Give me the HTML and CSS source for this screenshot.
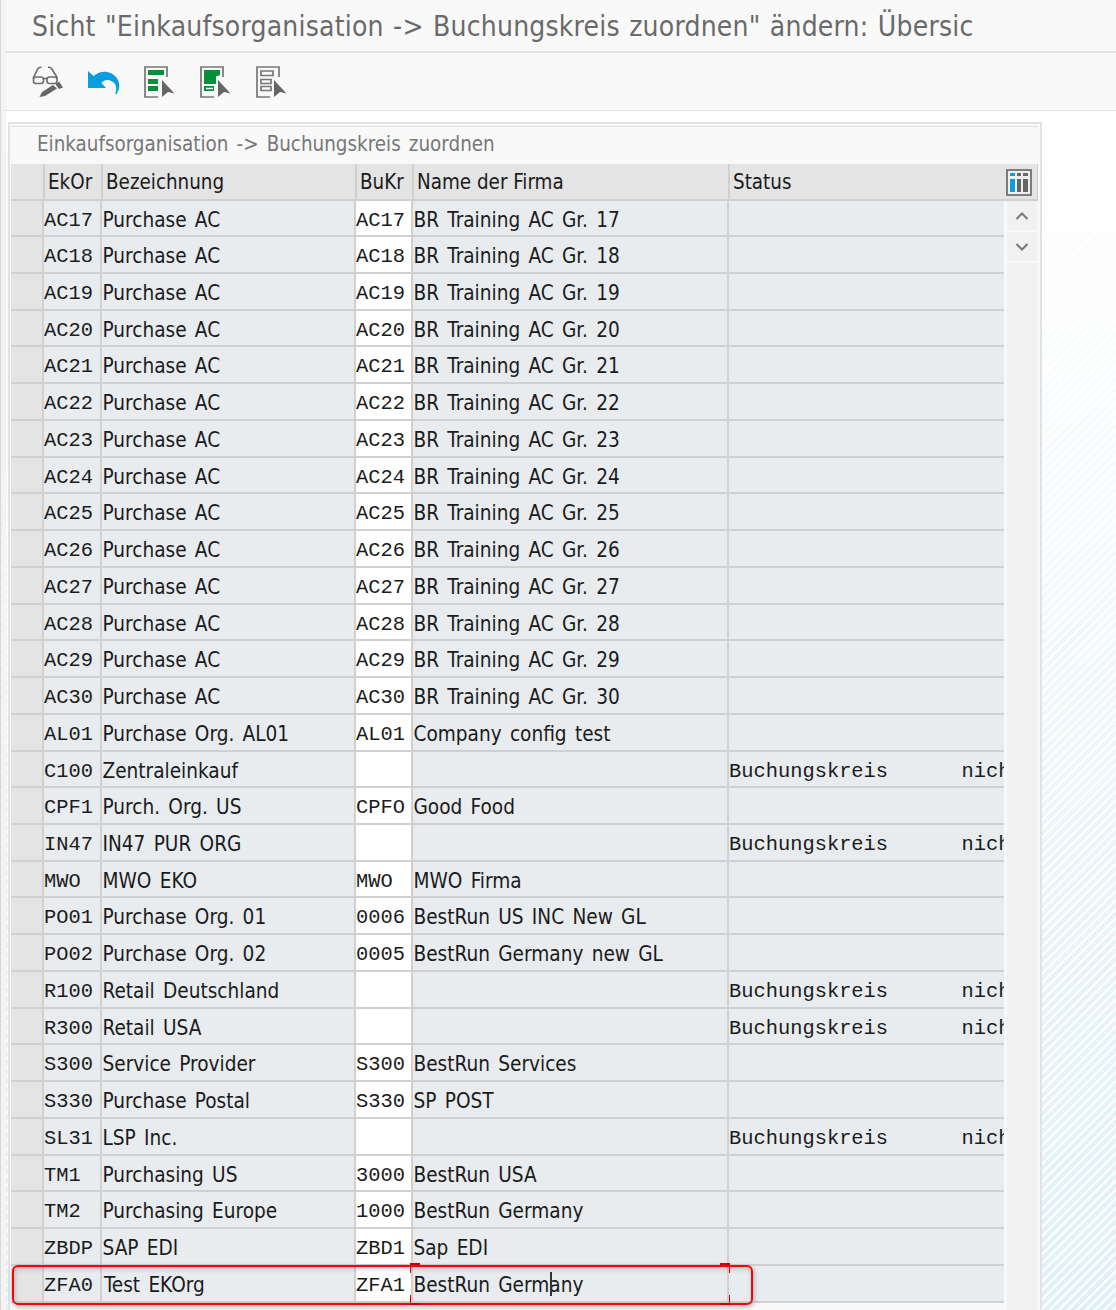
FILE: index.html
```
<!DOCTYPE html>
<html lang="de"><head><meta charset="utf-8"><title>Sicht</title><link rel="stylesheet" href="styles.css"></head>
<body>
<div class="window">
<header class="titlebar"><h1>Sicht "Einkaufsorganisation -&gt; Buchungskreis zuordnen" ändern: Übersic</h1></header>
<nav class="toolbar">
<svg class="tool" viewBox="0 0 32 32"><g fill="none" stroke="#6c6c6c" stroke-width="1.6"><path d="M1 12.5 L6 2.5 Q7 1 9.5 1.2 M16 1.2 Q18.500 1 19.500 2.500 L25.500 12"/><rect x="1.500" y="11" width="10" height="6.500" rx="2.500"/><rect x="15" y="11" width="10" height="6.500" rx="2.500"/><path d="M11.500 12.500 H15"/></g><path fill="#666" d="M7.500 31 L10 26 L21 19 L25 22.500 L13 30Z M23.500 18.500 L27 15.500 L31 21.500 L27 23Z"/></svg>
<svg class="tool" viewBox="0 0 32 32"><path fill="#0a9de0" d="M0 5 L5.500 10 C11 5.500 18 4.500 23.500 7.500 C31 11.500 34 20 28.500 28 L27 28 C30 22 27.500 16 22 14.500 C18.500 13.500 15.500 14.500 13.500 17 L18 22 H0Z"/></svg>
<svg class="tool" viewBox="0 0 32 32"><path fill="none" stroke="#777" stroke-width="1.700" d="M23 11 V1 H1 V31 H14"/><path fill="#078f3c" d="M4 4h16v5H4z M4 13h10v5H4z M4 20h10v5H4z"/><path fill="#666" d="M18 14 L30.500 27.500 L24 26 L18 31Z"/></svg>
<svg class="tool" viewBox="0 0 32 32"><path fill="none" stroke="#777" stroke-width="1.700" d="M23 11 V1 H1 V31 H14"/><path fill="#078f3c" d="M4 4h16v5l-4 1.500V18H4z M4 20h10v5H4z"/><path stroke="#fff" stroke-width="1.500" d="M6 22.500h7"/><path fill="#666" d="M18 14 L30.500 27.500 L24 26 L18 31Z"/></svg>
<svg class="tool" viewBox="0 0 32 32"><path fill="none" stroke="#777" stroke-width="1.700" d="M23 11 V1 H1 V31 H14"/><path fill="none" stroke="#777" stroke-width="1.700" d="M5 5h12v4.500H5z M5 13.500h10v4H5z M5 20.500h10v4H5z"/><path fill="#666" d="M18 14 L30.500 27.500 L24 26 L18 31Z"/></svg>
</nav>
<main class="workspace">
<section class="panel">
<h2>Einkaufsorganisation -&gt; Buchungskreis zuordnen</h2>
<div class="head"><i></i><b>EkOr</b><b>Bezeichnung</b><b>BuKr</b><b>Name der Firma</b><b>Status</b>
<svg class="config" viewBox="0 0 26 27"><rect x="1" y="1" width="24" height="25" fill="#eee" stroke="#707070" stroke-width="1.800"/><path fill="#0a9de0" d="M4 4h5v3H4z M4 10h5v13H4z"/><path fill="#666" d="M11 4h4v3h-4z M17 4h5v3h-5z M11 10h4v13h-4z M17 10h5v13h-5z"/></svg></div>
<div class="body">
<div class="rows">
<div class="row"><i></i><code>AC17</code><span>Purchase AC</span><code>AC17</code><span>BR Training AC Gr. 17</span><code></code></div>
<div class="row"><i></i><code>AC18</code><span>Purchase AC</span><code>AC18</code><span>BR Training AC Gr. 18</span><code></code></div>
<div class="row"><i></i><code>AC19</code><span>Purchase AC</span><code>AC19</code><span>BR Training AC Gr. 19</span><code></code></div>
<div class="row"><i></i><code>AC20</code><span>Purchase AC</span><code>AC20</code><span>BR Training AC Gr. 20</span><code></code></div>
<div class="row"><i></i><code>AC21</code><span>Purchase AC</span><code>AC21</code><span>BR Training AC Gr. 21</span><code></code></div>
<div class="row"><i></i><code>AC22</code><span>Purchase AC</span><code>AC22</code><span>BR Training AC Gr. 22</span><code></code></div>
<div class="row"><i></i><code>AC23</code><span>Purchase AC</span><code>AC23</code><span>BR Training AC Gr. 23</span><code></code></div>
<div class="row"><i></i><code>AC24</code><span>Purchase AC</span><code>AC24</code><span>BR Training AC Gr. 24</span><code></code></div>
<div class="row"><i></i><code>AC25</code><span>Purchase AC</span><code>AC25</code><span>BR Training AC Gr. 25</span><code></code></div>
<div class="row"><i></i><code>AC26</code><span>Purchase AC</span><code>AC26</code><span>BR Training AC Gr. 26</span><code></code></div>
<div class="row"><i></i><code>AC27</code><span>Purchase AC</span><code>AC27</code><span>BR Training AC Gr. 27</span><code></code></div>
<div class="row"><i></i><code>AC28</code><span>Purchase AC</span><code>AC28</code><span>BR Training AC Gr. 28</span><code></code></div>
<div class="row"><i></i><code>AC29</code><span>Purchase AC</span><code>AC29</code><span>BR Training AC Gr. 29</span><code></code></div>
<div class="row"><i></i><code>AC30</code><span>Purchase AC</span><code>AC30</code><span>BR Training AC Gr. 30</span><code></code></div>
<div class="row"><i></i><code>AL01</code><span>Purchase Org. AL01</span><code>AL01</code><span>Company config test</span><code></code></div>
<div class="row"><i></i><code>C100</code><span>Zentraleinkauf</span><code></code><span></span><code>Buchungskreis      nich</code></div>
<div class="row"><i></i><code>CPF1</code><span>Purch. Org. US</span><code>CPFO</code><span>Good Food</span><code></code></div>
<div class="row"><i></i><code>IN47</code><span>IN47 PUR ORG</span><code></code><span></span><code>Buchungskreis      nich</code></div>
<div class="row"><i></i><code>MWO</code><span>MWO EKO</span><code>MWO</code><span>MWO Firma</span><code></code></div>
<div class="row"><i></i><code>PO01</code><span>Purchase Org. 01</span><code>0006</code><span>BestRun US INC New GL</span><code></code></div>
<div class="row"><i></i><code>PO02</code><span>Purchase Org. 02</span><code>0005</code><span>BestRun Germany new GL</span><code></code></div>
<div class="row"><i></i><code>R100</code><span>Retail Deutschland</span><code></code><span></span><code>Buchungskreis      nich</code></div>
<div class="row"><i></i><code>R300</code><span>Retail USA</span><code></code><span></span><code>Buchungskreis      nich</code></div>
<div class="row"><i></i><code>S300</code><span>Service Provider</span><code>S300</code><span>BestRun Services</span><code></code></div>
<div class="row"><i></i><code>S330</code><span>Purchase Postal</span><code>S330</code><span>SP POST</span><code></code></div>
<div class="row"><i></i><code>SL31</code><span>LSP Inc.</span><code></code><span></span><code>Buchungskreis      nich</code></div>
<div class="row"><i></i><code>TM1</code><span>Purchasing US</span><code>3000</code><span>BestRun USA</span><code></code></div>
<div class="row"><i></i><code>TM2</code><span>Purchasing Europe</span><code>1000</code><span>BestRun Germany</span><code></code></div>
<div class="row"><i></i><code>ZBDP</code><span>SAP EDI</span><code>ZBD1</code><span>Sap EDI</span><code></code></div>
<div class="row active"><i></i><code>ZFA0</code><span>Test EKOrg</span><code>ZFA1</code><span>BestRun Germany</span><code></code><div class="marker"></div><div class="focus"></div><div class="caret"></div></div>
</div>
<div class="scroll"><svg viewBox="0 0 30 29"><path d="M9.500 18 L15 12.500 L20.500 18"/></svg><svg viewBox="0 0 30 29"><path d="M9.500 12 L15 17.500 L20.500 12"/></svg><div class="track"></div></div>
</div>
</section>
</main>
</div>
</body></html>
```
FILE: styles.css
```
* { box-sizing: border-box; }
body { margin: 0; height: 1310px; overflow: hidden; background: #f3f3f3; border-left: 1px solid #d8d8d8; font-family: "DejaVu Sans Condensed", "DejaVu Sans", sans-serif; font-stretch: condensed; font-size: 20.6px; color: #1b1b1b; }
.window { margin-left: 5px; height: 1310px; display: flex; flex-direction: column; background: #f9f9f9; }
.titlebar { height: 53px; flex: none; border-bottom: 2px solid #e4e4e4; padding-left: 26px; }
h1 { margin: 0; font-size: 28px; letter-spacing: 0.2px; word-spacing: 1.2px; font-weight: 400; line-height: 53px; color: #6a6a6a; white-space: nowrap; }
.toolbar { height: 58px; flex: none; border-bottom: 1px solid #dedede; padding: 13px 0 0 26px; display: flex; gap: 24px; }
.tool { width: 32px; height: 32px; }
.workspace { flex: 1; padding: 11px 0 0 2px; background: linear-gradient(to bottom, #fff 0, #fffc 25%, #fff6 55%, #fff0 100%), repeating-linear-gradient(135deg, #e0f0f8 0 3.6px, #fff 4.2px 5.8px, #e0f0f8 6.4px); }
.panel { width: 1034px; height: 1188px; border: 2px solid #e2e2e2; border-bottom: 0; background: #f9f9f9; padding: 2px 2px 0 1px; display: flex; flex-direction: column; }
h2 { margin: 0; height: 38px; flex: none; border-top: 1px solid #e0e0e0; padding-left: 26px; font-size: 20.4px; word-spacing: 2.3px; font-weight: 400; line-height: 34px; color: #777; }
.head { height: 36.5px; flex: none; background: #e4e4e4; border-bottom: 2px solid #cfcfcf; border-right: 1px solid #ccc; display: grid; grid-template-columns: 32px 58px 254px 57px 316px 277px 26px; }
.head b { font-weight: 400; font-size: 20.4px; line-height: 36px; padding-left: 3px; border-left: 2px solid #d0d0d0; white-space: nowrap; }
.config { width: 26px; height: 27px; margin: 5px 0 0 1px; }
.body { display: flex; flex: 1; gap: 4px; }
.rows { width: 993px; }
.row { position: relative; height: 36.74px; display: grid; grid-template-columns: 31px 58px 254px 57px 316px 277px; border-bottom: 2px solid #d0d0d0; background: #e8ecef; }
.row i { background: #e4e4e4; }
.row span, .row code { border-left: 2px solid #d0d0d0; line-height: 38px; overflow: hidden; white-space: pre; }
.row span { padding-left: 0.5px; word-spacing: 2.4px; }
.row.active span:nth-child(3) { padding-left: 2px; }
.row code { font-family: "Liberation Mono", monospace; font-size: 20.4px; line-height: 39px; }
.row code:nth-child(4) { background: #fff; }
.scroll { width: 30px; margin-left: -1px; display: flex; flex-direction: column; gap: 2px; }
.scroll svg { width: 30px; height: 29px; background: #f1f1f1; fill: none; stroke: #777; stroke-width: 2; }
.track { flex: 1; background: #f1f1f1; }
.marker { position: absolute; left: 1px; top: -1px; width: 741px; height: 40px; border: 2px solid #f80408; border-radius: 6px; box-shadow: 1px 2px 5px #0004, inset 1px 2px 5px #0003; }
.focus { position: absolute; left: 399px; top: -3px; width: 320px; height: 42px; background: linear-gradient(#c00,#c00) 0 0/10px 2px, linear-gradient(#c00,#c00) 0 0/1px 10px, linear-gradient(#c00,#c00) 100% 0/10px 2px, linear-gradient(#c00,#c00) 100% 0/1px 10px, linear-gradient(#c00,#c00) 0 100%/10px 2px, linear-gradient(#c00,#c00) 0 100%/1px 10px, linear-gradient(#c00,#c00) 100% 100%/10px 2px, linear-gradient(#c00,#c00) 100% 100%/1px 10px; background-repeat: no-repeat; }
.caret { position: absolute; left: 539px; top: 6px; width: 2px; height: 24px; background: #333; }
```
